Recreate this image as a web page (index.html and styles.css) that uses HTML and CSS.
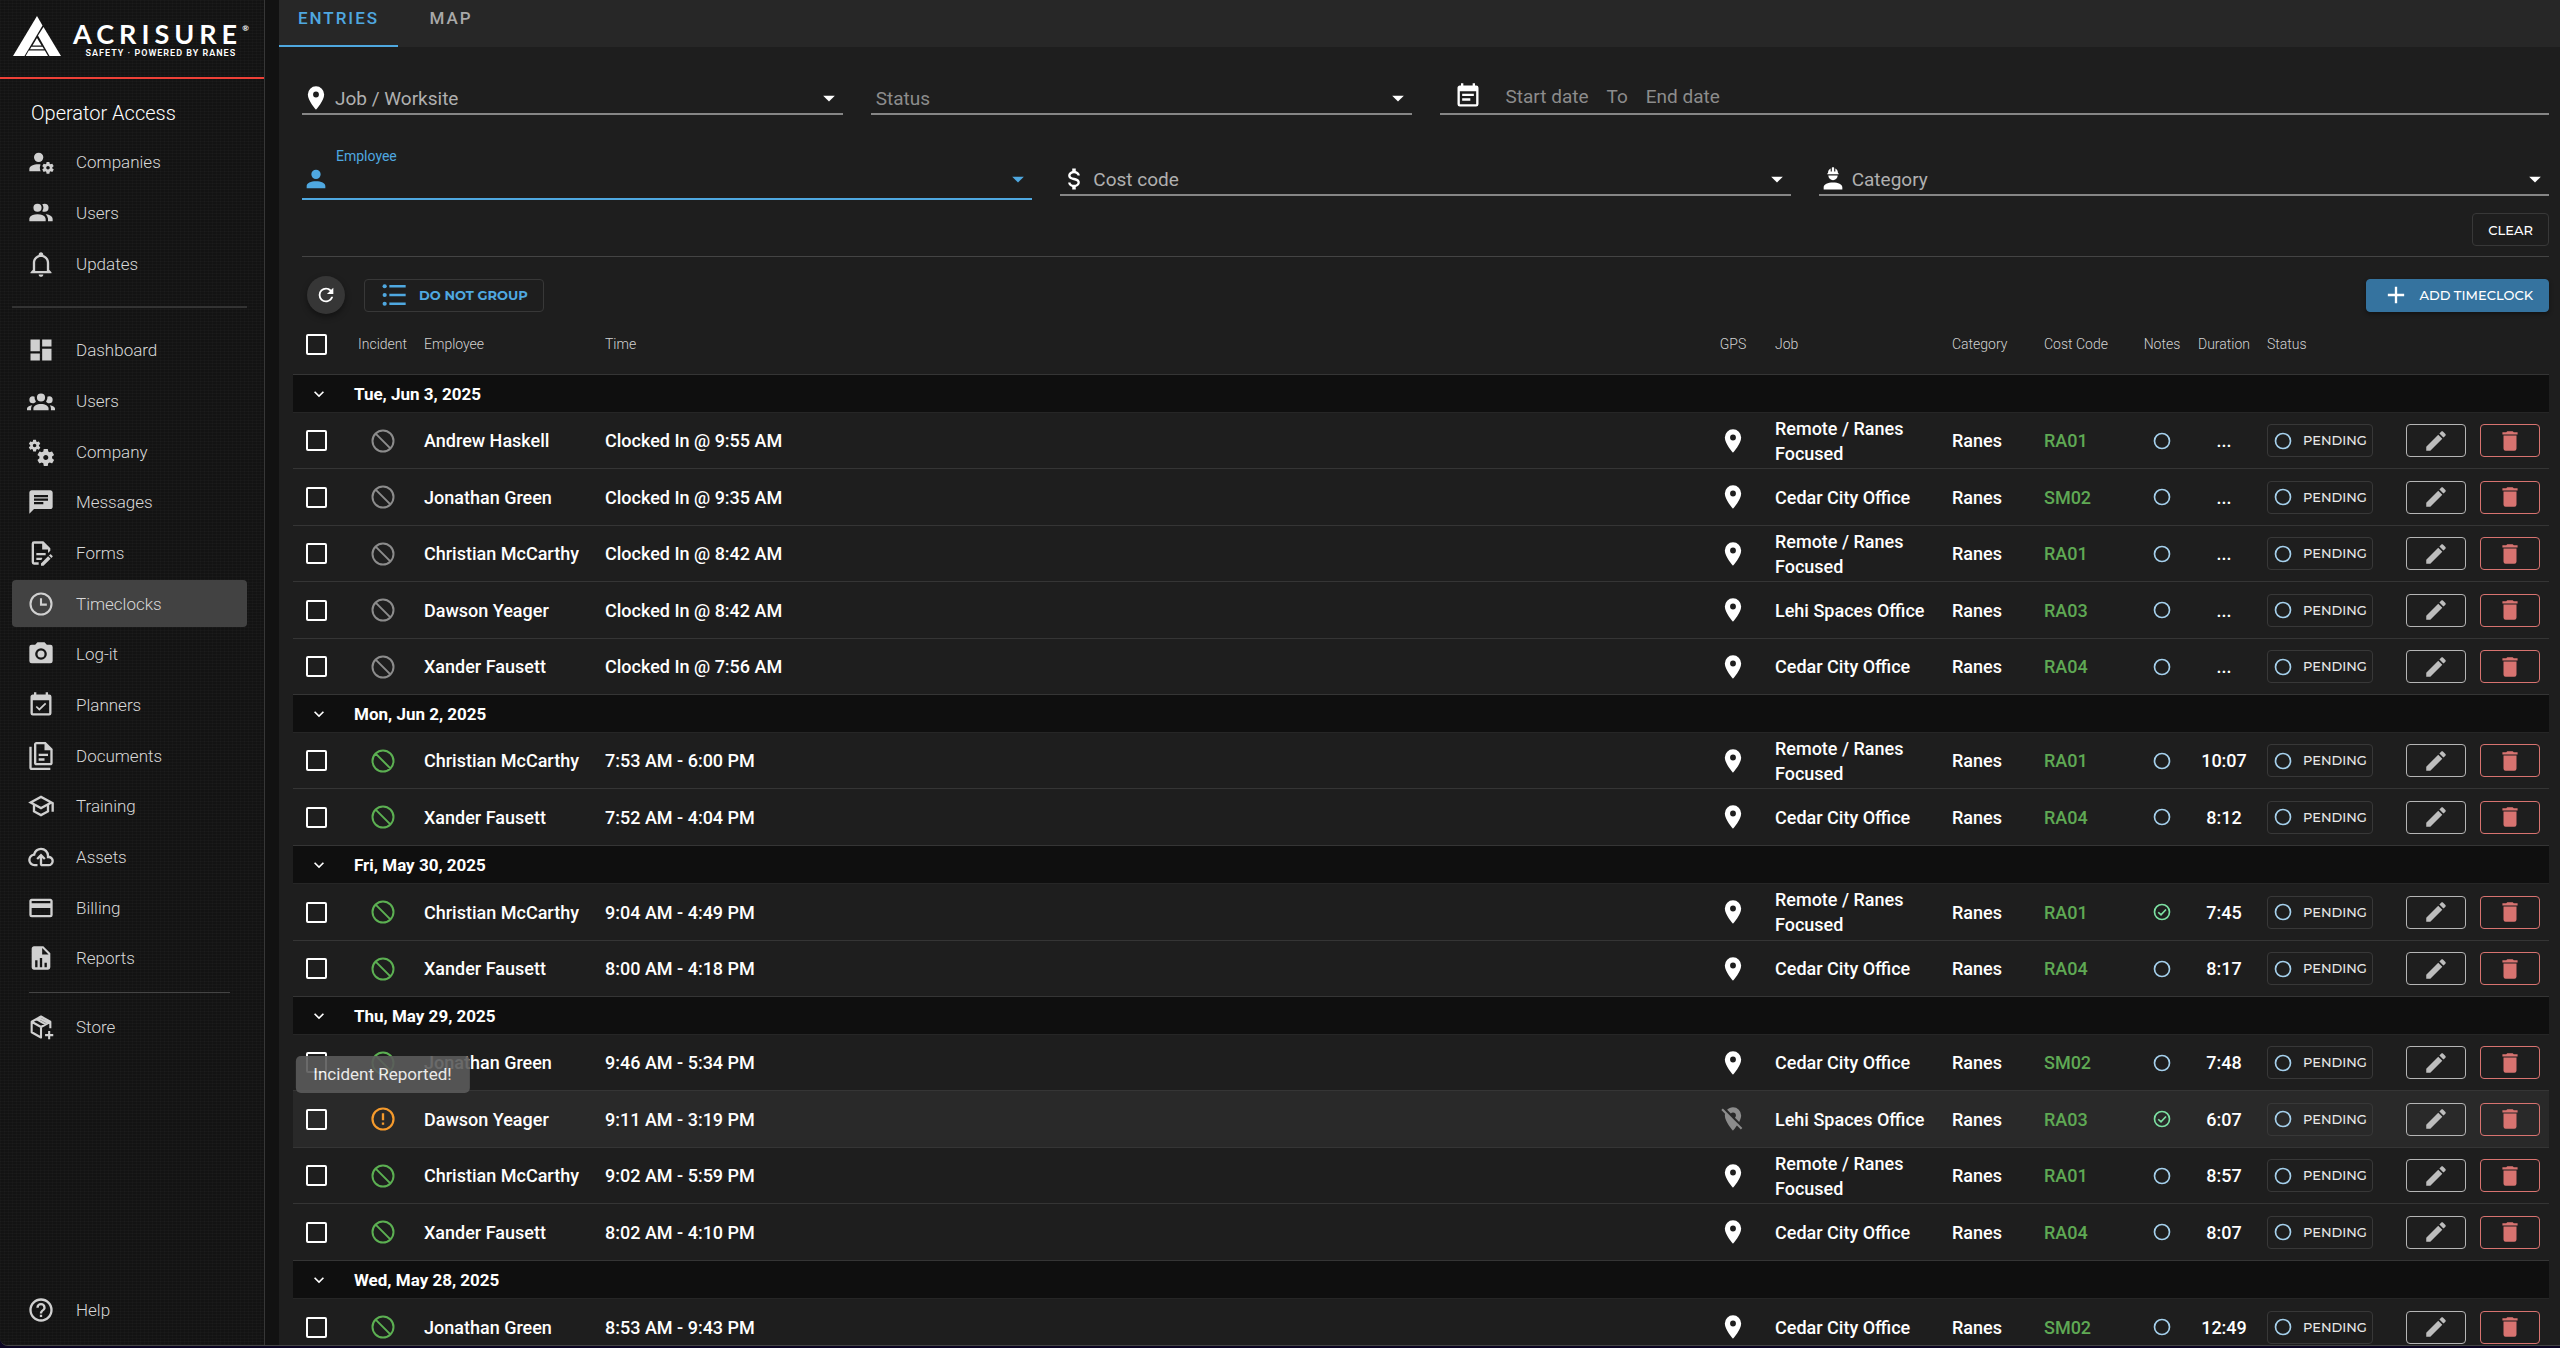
FILE: index.html
```html
<!DOCTYPE html>
<html lang="en">
<head>
    <meta charset="UTF-8">
    <meta name="viewport" content="width=device-width, initial-scale=1.0">
    <title>Timeclocks</title>
    <link rel="stylesheet" href="styles.css">
</head>
<body>
    <!-- Icon sprite -->
    <svg class="sprite" aria-hidden="true">
        <symbol id="gear" viewBox="0 0 24 24"><path fill-rule="evenodd" d="M17 12C16.87 12 16.76 12.09 16.74 12.21L16.55 13.53C16.25 13.66 15.96 13.82 15.7 14L14.46 13.5C14.35 13.5 14.22 13.5 14.15 13.63L13.15 15.36C13.09 15.47 13.11 15.6 13.21 15.68L14.27 16.5C14.25 16.67 14.24 16.83 14.24 17C14.24 17.17 14.25 17.33 14.27 17.5L13.21 18.32C13.12 18.4 13.09 18.53 13.15 18.64L14.15 20.37C14.21 20.5 14.34 20.5 14.46 20.5L15.7 20C15.96 20.18 16.24 20.35 16.55 20.47L16.74 21.79C16.76 21.91 16.86 22 17 22H19C19.11 22 19.22 21.91 19.24 21.79L19.43 20.47C19.73 20.34 20 20.18 20.27 20L21.5 20.5C21.63 20.5 21.76 20.5 21.83 20.37L22.83 18.64C22.89 18.53 22.86 18.4 22.77 18.32L21.7 17.5C21.72 17.33 21.74 17.17 21.74 17C21.74 16.83 21.73 16.67 21.7 16.5L22.76 15.68C22.85 15.6 22.88 15.47 22.82 15.36L21.82 13.63C21.76 13.5 21.63 13.5 21.5 13.5L20.27 14C20 13.82 19.73 13.65 19.42 13.53L19.23 12.21C19.22 12.09 19.11 12 19 12H17M18 15.5C18.83 15.5 19.5 16.17 19.5 17C19.5 17.83 18.83 18.5 18 18.5C17.16 18.5 16.5 17.83 16.5 17C16.5 16.17 17.17 15.5 18 15.5Z"/></symbol>
        <symbol id="account-cog" viewBox="0 0 24 24"><path d="M10 4A4 4 0 0 0 6 8A4 4 0 0 0 10 12A4 4 0 0 0 14 8A4 4 0 0 0 10 4M10 14C5.58 14 2 15.79 2 18V20H11.68A7 7 0 0 1 11 17A7 7 0 0 1 11.64 14.09C11.11 14.03 10.56 14 10 14Z"/><use href="#gear" width="24" height="24"/></symbol>
        <symbol id="cogs" viewBox="0 0 24 24"><use href="#gear" width="24" height="24" transform="translate(-11.5 -10.5)"/><use href="#gear" width="24" height="24" transform="translate(-10 -8) scale(1.45)"/></symbol>
        <symbol id="account-multiple" viewBox="0 0 24 24"><path d="M16 17V19H2V17S2 13 9 13 16 17 16 17M12.5 7.5A3.5 3.5 0 1 0 9 11A3.5 3.5 0 0 0 12.5 7.5M15.94 13A5.32 5.32 0 0 1 18 17V19H22V17S22 13.37 15.94 13M15 4A3.39 3.39 0 0 0 13.07 4.59A5 5 0 0 1 13.07 10.41A3.39 3.39 0 0 0 15 11A3.5 3.5 0 0 0 15 4Z"/></symbol>
        <symbol id="bell" viewBox="0 0 24 24"><path fill-rule="evenodd" d="M10 21H14C14 22.1 13.1 23 12 23S10 22.1 10 21M21 19V20H3V19L5 17V11C5 7.9 7 5.2 10 4.3V4C10 2.9 10.9 2 12 2S14 2.9 14 4V4.3C17 5.2 19 7.9 19 11V17L21 19M17 11C17 8.2 14.8 6 12 6S7 8.2 7 11V18H17V11Z"/></symbol>
        <symbol id="dashboard" viewBox="0 0 24 24"><path d="M13,3V9H21V3M13,21H21V11H13M3,21H11V15H3M3,13H11V3H3V13Z"/></symbol>
        <symbol id="account-group" viewBox="0 0 24 24"><path d="M12,5.5A3.5,3.5 0 0,1 15.5,9A3.5,3.5 0 0,1 12,12.5A3.5,3.5 0 0,1 8.5,9A3.5,3.5 0 0,1 12,5.5M5,8C5.56,8 6.08,8.15 6.53,8.42C6.38,9.85 6.8,11.27 7.66,12.38C7.16,13.34 6.16,14 5,14A3,3 0 0,1 2,11A3,3 0 0,1 5,8M19,8A3,3 0 0,1 22,11A3,3 0 0,1 19,14C17.84,14 16.84,13.34 16.34,12.38C17.2,11.27 17.62,9.85 17.47,8.42C17.92,8.15 18.44,8 19,8M5.5,18.25C5.5,16.18 8.41,14.5 12,14.5C15.59,14.5 18.5,16.18 18.5,18.25V20H5.5V18.25M0,20V18.5C0,17.11 1.89,15.94 4.45,15.6C3.86,16.28 3.5,17.22 3.5,18.25V20H0M24,20H20.5V18.25C20.5,17.22 20.14,16.28 19.55,15.6C22.11,15.94 24,17.11 24,18.5V20Z"/></symbol>
        <symbol id="message" viewBox="0 0 24 24"><path fill-rule="evenodd" d="M20 2H4c-1.1 0-1.99.9-1.99 2L2 22l4-4h14c1.1 0 2-.9 2-2V4c0-1.1-.9-2-2-2zM6 9h12v2H6V9zm8 5H6v-2h8v2zm4-6H6V6h12v2z"/></symbol>
        <symbol id="form" viewBox="0 0 24 24"><path d="M8,12H16V14H8V12M10,20H6V4H13V9H18V12.1L20,10.1V8L14,2H6A2,2 0 0,0 4,4V20A2,2 0 0,0 6,22H10V20M8,18H12.1L13,17.1V16H8V18M20.2,13C20.3,13 20.5,13.1 20.6,13.2L21.9,14.5C22.1,14.7 22.1,15.1 21.9,15.3L20.9,16.3L18.8,14.2L19.8,13.2C19.9,13.1 20,13 20.2,13M20.2,16.9L14.1,23H12V20.9L18.1,14.8L20.2,16.9Z"/></symbol>
        <symbol id="clock" viewBox="0 0 24 24"><path d="M12 3a9 9 0 1 0 0 18a9 9 0 1 0 0-18M12 7V12.5H17" fill="none" stroke="currentColor" stroke-width="1.8"/></symbol>
        <symbol id="camera" viewBox="0 0 24 24"><path fill-rule="evenodd" d="M4,4H7L9,2H15L17,4H20A2,2 0 0,1 22,6V18A2,2 0 0,1 20,20H4A2,2 0 0,1 2,18V6A2,2 0 0,1 4,4M12,7A5,5 0 0,0 7,12A5,5 0 0,0 12,17A5,5 0 0,0 17,12A5,5 0 0,0 12,7M12,9A3,3 0 0,1 15,12A3,3 0 0,1 12,15A3,3 0 0,1 9,12A3,3 0 0,1 12,9Z"/></symbol>
        <symbol id="calendar-check" viewBox="0 0 24 24"><path fill-rule="evenodd" d="M19,19H5V8H19M19,3H18V1H16V3H8V1H6V3H5C3.89,3 3,3.9 3,5V19A2,2 0 0,0 5,21H19A2,2 0 0,0 21,19V5A2,2 0 0,0 19,3M16.53,11.06L15.47,10L10.59,14.88L8.47,12.76L7.41,13.82L10.59,17L16.53,11.06Z"/></symbol>
        <symbol id="documents" viewBox="0 0 24 24"><path fill-rule="evenodd" d="M16 0H8C6.9 0 6 .9 6 2V18C6 19.1 6.9 20 8 20H20C21.1 20 22 19.1 22 18V6L16 0M20 18H8V2H15V7H20V18M4 4V22H20V24H4C2.9 24 2 23.1 2 22V4H4M10 10V12H18V10H10M10 14V16H15V14H10Z"/></symbol>
        <symbol id="school" viewBox="0 0 24 24"><path fill-rule="evenodd" d="M12 3L1 9L5 11.18V17.18L12 21L19 17.18V11.18L21 10.09V17H23V9L12 3M18.82 9L12 12.72L5.18 9L12 5.28L18.82 9M17 16L12 18.72L7 16V12.27L12 15L17 12.27V16Z"/></symbol>
        <symbol id="cloud" viewBox="0 0 24 24"><path d="M6.5 20Q4.22 20 2.61 18.43 1 16.85 1 14.58 1 12.63 2.17 11.1 3.35 9.57 5.25 9.15 5.88 6.85 7.75 5.43 9.63 4 12 4 14.93 4 16.96 6.04 19 8.07 19 11 20.73 11.2 21.86 12.5 23 13.78 23 15.5 23 17.38 21.69 18.69 20.38 20 18.5 20H13Q12.18 20 11.59 19.41 11 18.83 11 18V12.85L9.4 14.4 8 13 12 9 16 13 14.6 14.4 13 12.85V18H18.5Q19.55 18 20.27 17.27 21 16.55 21 15.5 21 14.45 20.27 13.73 19.55 13 18.5 13H17V11Q17 8.93 15.54 7.46 14.08 6 12 6 9.93 6 8.46 7.46 7 8.93 7 11H6.5Q5.05 11 4.03 12.03 3 13.05 3 14.5 3 15.95 4.03 17 5.05 18 6.5 18H9V20Z"/></symbol>
        <symbol id="card" viewBox="0 0 24 24"><path fill-rule="evenodd" d="M20,8H4V6H20M20,18H4V12H20M20,4H4C2.89,4 2,4.89 2,6V18A2,2 0 0,0 4,20H20A2,2 0 0,0 22,18V6C22,4.89 21.1,4 20,4Z"/></symbol>
        <symbol id="report" viewBox="0 0 24 24"><path fill-rule="evenodd" d="M13,9H18.5L13,3.5V9M6,2H14L20,8V20A2,2 0 0,1 18,22H6C4.89,22 4,21.1 4,20V4C4,2.89 4.89,2 6,2M7,20H9V14H7V20M11,20H13V12H11V20M15,20H17V16H15V20Z"/></symbol>
        <symbol id="package" viewBox="0 0 24 24"><path fill="none" stroke="currentColor" stroke-width="1.8" stroke-linejoin="round" d="M20 13V7.5L12 3L4 7.500V16.500L12 21V12L4 7.500M12 12L20 7.500M8 5.250L16 9.750M10 4.200L18 8.600M19 15.500V22.500M15.500 19H22.500"/></symbol>
        <symbol id="help" viewBox="0 0 24 24"><path fill-rule="evenodd" d="M11,18H13V16H11V18M12,2A10,10 0 0,0 2,12A10,10 0 0,0 12,22A10,10 0 0,0 22,12A10,10 0 0,0 12,2M12,20C7.59,20 4,16.41 4,12C4,7.59 7.59,4 12,4C16.41,4 20,7.59 20,12C20,16.41 16.41,20 12,20M12,6A4,4 0 0,0 8,10H10A2,2 0 0,1 12,8A2,2 0 0,1 14,10C14,12 11,11.75 11,15H13C13,12.75 16,12.5 16,10A4,4 0 0,0 12,6Z"/></symbol>
        <symbol id="marker" viewBox="0 0 24 24"><path fill-rule="evenodd" d="M12,11.5A2.5,2.5 0 0,1 9.5,9A2.5,2.5 0 0,1 12,6.5A2.5,2.5 0 0,1 14.5,9A2.5,2.5 0 0,1 12,11.5M12,2A7,7 0 0,0 5,9C5,14.25 12,22 12,22C12,22 19,14.25 19,9A7,7 0 0,0 12,2Z"/></symbol>
        <symbol id="marker-off" viewBox="0 0 24 24"><path d="M16.37,16.1L11.75,11.47L11.64,11.36L3.27,3L2,4.27L5.18,7.45C5.06,7.95 5,8.46 5,9C5,14.25 12,22 12,22C12,22 13.67,20.15 15.37,17.65L18.73,21L20,19.72M12,6.5A2.5,2.5 0 0,1 14.5,9C14.5,9.73 14.17,10.39 13.67,10.85L17.3,14.5C18.28,12.62 19,10.68 19,9A7,7 0 0,0 12,2C10,2 8.24,2.82 6.96,4.14L10.15,7.33C10.61,6.82 11.26,6.5 12,6.5Z"/></symbol>
        <symbol id="account" viewBox="0 0 24 24"><path d="M12,4A4,4 0 0,1 16,8A4,4 0 0,1 12,12A4,4 0 0,1 8,8A4,4 0 0,1 12,4M12,14C16.42,14 20,15.79 20,18V20H4V18C4,15.79 7.58,14 12,14Z"/></symbol>
        <symbol id="dollar" viewBox="0 0 24 24"><path d="M7,15H9C9,16.08 10.37,17 12,17C13.63,17 15,16.08 15,15C15,13.9 13.96,13.5 11.76,12.97C9.64,12.44 7,11.78 7,9C7,7.21 8.47,5.69 10.5,5.18V3H13.5V5.18C15.53,5.69 17,7.21 17,9H15C15,7.92 13.63,7 12,7C10.37,7 9,7.92 9,9C9,10.1 10.04,10.5 12.24,11.03C14.36,11.56 17,12.22 17,15C17,16.79 15.53,18.31 13.5,18.82V21H10.5V18.82C8.47,18.31 7,16.79 7,15Z"/></symbol>
        <symbol id="hard-hat" viewBox="0 0 24 24"><path d="M12,15C7.58,15 4,16.79 4,19V21H20V19C20,16.79 16.42,15 12,15M8,9A4,4 0 0,0 12,13A4,4 0 0,0 16,9M11.5,2C11.2,2 11,2.21 11,2.5V5.5H10V3C10,3 7.75,3.86 7.75,6.75C7.75,6.75 7,6.89 7,8H17C16.95,6.89 16.25,6.75 16.25,6.75C16.25,3.86 14,3 14,3V5.5H13V2.5C13,2.21 12.81,2 12.5,2H11.5Z"/></symbol>
        <symbol id="calendar-text" viewBox="0 0 24 24"><path fill-rule="evenodd" d="M14,14H7V16H14M19,19H5V8H19M19,3H18V1H16V3H8V1H6V3H5C3.89,3 3,3.9 3,5V19A2,2 0 0,0 5,21H19A2,2 0 0,0 21,19V5A2,2 0 0,0 19,3M17,10H7V12H17V10Z"/></symbol>
        <symbol id="refresh" viewBox="0 0 24 24"><path d="M17.65,6.35C16.2,4.9 14.21,4 12,4A8,8 0 0,0 4,12A8,8 0 0,0 12,20C15.73,20 18.84,17.45 19.73,14H17.65C16.83,16.33 14.61,18 12,18A6,6 0 0,1 6,12A6,6 0 0,1 12,6C13.66,6 15.14,6.69 16.22,7.78L13,11H20V4L17.65,6.35Z"/></symbol>
        <symbol id="list" viewBox="0 0 24 24"><path d="M8 3.500H22V5.500H8ZM8 11H22V13H8ZM8 18.500H22V20.500H8Z"/><circle cx="4" cy="4.500" r="1.800"/><circle cx="4" cy="12" r="1.800"/><circle cx="4" cy="19.500" r="1.800"/></symbol>
        <symbol id="plus" viewBox="0 0 24 24"><path d="M19,13H13V19H11V13H5V11H11V5H13V11H19V13Z"/></symbol>
        <symbol id="caret" viewBox="0 0 24 24"><path d="M7,10L12,15L17,10H7Z"/></symbol>
        <symbol id="chevron" viewBox="0 0 24 24"><path d="M7.41,8.58L12,13.17L16.59,8.58L18,10L12,16L6,10L7.41,8.58Z"/></symbol>
        <symbol id="cancel" viewBox="0 0 24 24"><path d="M12 3a9 9 0 1 0 0 18a9 9 0 1 0 0-18M5.700 5.700L18.300 18.300" fill="none" stroke="currentColor" stroke-width="1.700"/></symbol>
        <symbol id="alert" viewBox="0 0 24 24"><path d="M11,15H13V17H11V15M11,7H13V13H11V7"/><circle cx="12" cy="12" r="9" fill="none" stroke="currentColor" stroke-width="1.900"/></symbol>
        <symbol id="circle" viewBox="0 0 24 24"><circle cx="12" cy="12" r="9" fill="none" stroke="currentColor" stroke-width="2"/></symbol>
        <symbol id="check-circle" viewBox="0 0 24 24"><path d="M12 3a9 9 0 1 0 0 18a9 9 0 1 0 0-18M7.500 12.300L10.800 15.500L16.800 9" fill="none" stroke="currentColor" stroke-width="2"/></symbol>
        <symbol id="pencil" viewBox="0 0 24 24"><path d="M20.71,7.04C21.1,6.65 21.1,6 20.71,5.63L18.37,3.29C18,2.9 17.35,2.9 16.96,3.29L15.12,5.12L18.87,8.87M3,17.25V21H6.75L17.81,9.93L14.06,6.18L3,17.25Z"/></symbol>
        <symbol id="trash" viewBox="0 0 24 24"><path d="M19,4H15.5L14.5,3H9.5L8.5,4H5V6H19M6,19A2,2 0 0,0 8,21H16A2,2 0 0,0 18,19V7H6V19Z"/></symbol>
    </svg>

    <div class="app">
        <aside class="sidebar">
            <div class="brand">
                <svg class="brand-mark" viewBox="0 0 48 40" aria-hidden="true">
                    <path fill="#fff" d="M24 0L29.500 9.500L11.500 40H0Z"/>
                    <path fill="#fff" d="M30.500 11L48 40H36.500L25 19.500Z"/>
                    <path fill="#fff" d="M24 22L28.500 29.500H19.500ZM18.500 30.700H29.500L31 33.300H17ZM15.800 34.500H31.800L35 40H12.700Z"/>
                </svg>
                <div class="brand-text">
                    <span class="brand-name">ACRISURE<sup class="brand-reg">®</sup></span>
                    <span class="brand-tag">SAFETY · POWERED BY RANES</span>
                </div>
            </div>
            <nav class="side-nav" aria-label="Main">
                <h2 class="nav-title">Operator Access</h2>
                <ul class="nav-list">
                    <li><a href="#"><svg><use href="#account-cog"/></svg>Companies</a></li>
                    <li><a href="#"><svg><use href="#account-multiple"/></svg>Users</a></li>
                    <li><a href="#"><svg><use href="#bell"/></svg>Updates</a></li>
                </ul>
                <hr class="nav-divider">
                <ul class="nav-list">
                    <li><a href="#"><svg><use href="#dashboard"/></svg>Dashboard</a></li>
                    <li><a href="#"><svg><use href="#account-group"/></svg>Users</a></li>
                    <li><a href="#"><svg><use href="#cogs"/></svg>Company</a></li>
                    <li><a href="#"><svg><use href="#message"/></svg>Messages</a></li>
                    <li><a href="#"><svg><use href="#form"/></svg>Forms</a></li>
                    <li><a href="#" class="active" aria-current="page"><svg><use href="#clock"/></svg>Timeclocks</a></li>
                    <li><a href="#"><svg><use href="#camera"/></svg>Log-it</a></li>
                    <li><a href="#"><svg><use href="#calendar-check"/></svg>Planners</a></li>
                    <li><a href="#"><svg><use href="#documents"/></svg>Documents</a></li>
                    <li><a href="#"><svg><use href="#school"/></svg>Training</a></li>
                    <li><a href="#"><svg><use href="#cloud"/></svg>Assets</a></li>
                    <li><a href="#"><svg><use href="#card"/></svg>Billing</a></li>
                    <li><a href="#"><svg><use href="#report"/></svg>Reports</a></li>
                </ul>
                <hr class="nav-divider short">
                <ul class="nav-list">
                    <li><a href="#"><svg><use href="#package"/></svg>Store</a></li>
                </ul>
                <ul class="nav-list nav-bottom">
                    <li><a href="#"><svg><use href="#help"/></svg>Help</a></li>
                </ul>
            </nav>
        </aside>

        <main class="main">
            <div class="tabs" role="tablist">
                <button class="tab selected" role="tab" aria-selected="true">ENTRIES</button>
                <button class="tab" role="tab" aria-selected="false">MAP</button>
            </div>

            <form class="filters">
                <div class="filter-row four">
                    <div class="field">
                        <svg class="field-icon"><use href="#marker"/></svg>
                        <select aria-label="Job / Worksite"><option>Job / Worksite</option></select>
                        <svg class="field-caret"><use href="#caret"/></svg>
                    </div>
                    <div class="field plain">
                        <select aria-label="Status"><option>Status</option></select>
                        <svg class="field-caret"><use href="#caret"/></svg>
                    </div>
                    <div class="field dates">
                        <svg class="field-icon"><use href="#calendar-text"/></svg>
                        <input type="text" placeholder="Start date" aria-label="Start date">
                        <span>To</span>
                        <input type="text" placeholder="End date" aria-label="End date">
                    </div>
                </div>
                <div class="filter-row three">
                    <div class="field focused">
                        <label for="employee">Employee</label>
                        <svg class="field-icon"><use href="#account"/></svg>
                        <select id="employee"><option></option></select>
                        <svg class="field-caret"><use href="#caret"/></svg>
                    </div>
                    <div class="field">
                        <svg class="field-icon"><use href="#dollar"/></svg>
                        <select aria-label="Cost code"><option>Cost code</option></select>
                        <svg class="field-caret"><use href="#caret"/></svg>
                    </div>
                    <div class="field">
                        <svg class="field-icon"><use href="#hard-hat"/></svg>
                        <select aria-label="Category"><option>Category</option></select>
                        <svg class="field-caret"><use href="#caret"/></svg>
                    </div>
                </div>
                <div class="filter-actions">
                    <button type="reset" class="btn">CLEAR</button>
                </div>
            </form>

            <div class="toolbar">
                <button class="refresh-btn" aria-label="Refresh"><svg><use href="#refresh"/></svg></button>
                <button class="btn group-btn"><svg><use href="#list"/></svg>DO NOT GROUP</button>
                <button class="btn add-btn"><svg><use href="#plus"/></svg>ADD TIMECLOCK</button>
            </div>

            <div class="table-wrap">
                <table class="entries">
                    <colgroup>
                        <col class="c-check"><col class="c-incident"><col class="c-employee"><col>
                        <col class="c-gps"><col class="c-job"><col class="c-category"><col class="c-cost">
                        <col class="c-notes"><col class="c-duration"><col class="c-status"><col class="c-actions">
                    </colgroup>
                    <thead>
                        <tr>
                            <th class="check"><input type="checkbox" aria-label="Select all"></th>
                            <th class="mid">Incident</th>
                            <th>Employee</th>
                            <th>Time</th>
                            <th class="mid">GPS</th>
                            <th>Job</th>
                            <th>Category</th>
                            <th>Cost Code</th>
                            <th class="mid">Notes</th>
                            <th class="mid">Duration</th>
                            <th>Status</th>
                            <th></th>
                        </tr>
                    </thead>
                </table>
            </div>
        </main>
    </div>
    <script src="script.js"></script>
</body>
</html>
```
FILE: styles.css
```css
* {
    margin: 0;
    padding: 0;
    box-sizing: border-box;
}

body {
    background: #0b0522;
    color: #fff;
    font-family: Roboto, "Liberation Sans", sans-serif;
    font-size: 17px;
}

button, input, select {
    font: inherit;
    color: inherit;
    background: none;
    border: none;
    outline: none;
}

svg {
    fill: currentColor;
    flex: none;
}

.sprite {
    display: none;
}

.app {
    display: flex;
    height: calc(100vh - 2px);
    overflow: hidden;
    background: #121212;
    border-bottom: 1px solid #444;
    border-bottom-left-radius: 8px;
}

/* Sidebar */
.sidebar {
    width: 265px;
    flex: none;
    display: flex;
    flex-direction: column;
    border-right: 1px solid #373737;
    background:
        repeating-linear-gradient(0deg, rgba(255, 255, 255, 0.02) 0 1px, transparent 1px 3px),
        repeating-linear-gradient(90deg, rgba(255, 255, 255, 0.015) 0 1px, transparent 1px 4px),
        #131313;
}

.brand {
    height: 79px;
    flex: none;
    display: flex;
    align-items: flex-start;
    gap: 12px;
    padding: 16px 0 0 13px;
    border-bottom: 2px solid #ee4037;
}

.brand-mark {
    width: 48px;
    height: 40px;
}

.brand-text {
    display: flex;
    flex-direction: column;
    align-items: center;
    padding-top: 5px;
}

.brand-name {
    display: flex;
    font-family: Lato, sans-serif;
    font-size: 27px;
    font-weight: 700;
    line-height: 26px;
    letter-spacing: 5px;
}

.brand-reg {
    font-size: 8px;
    line-height: 14px;
    letter-spacing: 0;
}

.brand-tag {
    font-size: 9px;
    font-weight: 600;
    line-height: 12px;
    letter-spacing: 1px;
}

.side-nav {
    flex: 1;
    display: flex;
    flex-direction: column;
    padding: 20px 17px 8px 12px;
}

.nav-title {
    font-size: 20px;
    font-weight: 300;
    line-height: 28px;
    padding-left: 19px;
    margin-bottom: 11px;
}

.nav-list {
    list-style: none;
}

.nav-list li {
    margin-bottom: 4px;
}

.nav-list li:nth-child(3n) {
    margin-bottom: 3px;
}

.nav-list a {
    display: flex;
    align-items: center;
    gap: 21px;
    height: 47px;
    padding-left: 15px;
    border-radius: 4px;
    color: #d8d8d8;
    font-weight: 300;
    text-decoration: none;
}

.nav-list a.active {
    background: #424242;
}

.nav-list svg {
    width: 28px;
    height: 28px;
    color: #d0d0d0;
}

.nav-divider {
    border: none;
    border-top: 2px solid #333;
    margin: 16px 0 18px;
}

.nav-divider.short {
    border-top: 1px solid #444;
    margin: 7px 17px 10px;
}

.nav-bottom {
    margin-top: auto;
}

/* Main */
.main {
    flex: 1;
    min-width: 0;
    margin-left: 14px;
    background: #1e1e1e;
}

.tabs {
    display: flex;
    height: 47px;
    background: #272727;
}

.tab {
    padding: 0 18px 9px;
    border-bottom: 2px solid transparent;
    color: #a9a9a9;
    font-weight: 500;
    letter-spacing: 2px;
    min-width: 106px;
}

.tab.selected {
    min-width: 119px;
    color: #4fa8e0;
    border-bottom-color: #4fa8e0;
}

.filters {
    margin: 0 11px 0 23px;
    padding: 36px 0 10px;
    border-bottom: 1px solid #444;
}

.filter-row {
    display: grid;
    align-items: start;
    gap: 28px;
    margin-bottom: 49px;
}

.filter-row.four {
    grid-template-columns: repeat(4, 1fr);
}

.filter-row.three {
    grid-template-columns: repeat(3, 1fr);
    margin-bottom: 13px;
}

.field {
    position: relative;
    display: flex;
    align-items: center;
    height: 32px;
    border-bottom: 2px solid #868686;
    color: #b0b0b0;
    font-size: 19px;
}

.field select {
    flex: 1;
    height: 30px;
    appearance: none;
    padding-left: 5px;
}

.field-icon,
.field-caret {
    width: 28px;
    height: 28px;
    color: #fff;
}

.field.plain {
    color: #8c8c8c;
}

.field.dates {
    grid-column: span 2;
    padding: 0 14px 4px;
    color: #8c8c8c;
}

.field.dates input {
    width: 84px;
    margin-left: 24px;
}

.field.dates span {
    margin: 0 -6px 0 17px;
}

.field.dates input::placeholder {
    color: #8c8c8c;
    opacity: 1;
}

.field.focused {
    height: 36px;
    padding-bottom: 4px;
    border-bottom-color: #4fa8e0;
}

.field.focused label {
    position: absolute;
    top: -16px;
    left: 34px;
    font-size: 14px;
    color: #4fa8e0;
}

.field.focused svg {
    color: #4fa8e0;
}

.filter-actions {
    display: flex;
    justify-content: flex-end;
}

.btn {
    display: flex;
    align-items: center;
    height: 33px;
    padding: 0 15px;
    border: 1px solid #383838;
    border-radius: 4px;
    font-family: Montserrat, Inter, sans-serif;
    font-size: 13px;
    font-weight: 500;
    cursor: pointer;
}

.toolbar {
    display: flex;
    align-items: center;
    margin: 19px 11px 0 28px;
}

.refresh-btn {
    display: flex;
    align-items: center;
    justify-content: center;
    width: 38px;
    height: 38px;
    margin-right: 19px;
    border-radius: 50%;
    background: #363636;
    box-shadow: 0 3px 6px rgba(0, 0, 0, 0.4);
}

.refresh-btn svg {
    width: 22px;
    height: 22px;
}

.group-btn {
    gap: 11px;
    color: #4fa8e0;
    font-weight: 700;
}

.group-btn svg {
    width: 28px;
    height: 28px;
}

.add-btn {
    margin-left: auto;
    gap: 9px;
    background: #35739f;
    border-color: #35739f;
    box-shadow: 0 2px 4px rgba(0, 0, 0, 0.4);
}

.add-btn svg {
    width: 28px;
    height: 28px;
}

/* Entries table */
.table-wrap {
    padding: 0 11px 0 14px;
}

.entries {
    width: 100%;
    table-layout: fixed;
    border-collapse: separate;
    border-spacing: 0;
}

.c-check { width: 57px; }
.c-incident { width: 65px; }
.c-employee { width: 181px; }
.c-gps { width: 66px; }
.c-job { width: 177px; }
.c-category { width: 92px; }
.c-cost { width: 99px; }
.c-notes { width: 56px; }
.c-duration { width: 68px; }
.c-status { width: 134px; }
.c-actions { width: 157px; }

.entries th,
.entries td {
    padding: 0 9px;
    border-bottom: 1px solid #353535;
    text-align: left;
    vertical-align: middle;
}

.entries thead th {
    height: 61px;
    color: #d2d2d2;
    font-size: 14px;
    font-weight: 300;
}

.entries td {
    height: 56px;
    font-size: 18px;
    font-weight: 500;
    line-height: 25px;
}

.entries tr.entry:nth-child(odd) td {
    height: 57px;
}

.entries .mid {
    padding: 0;
    text-align: center;
}

.entries .check {
    padding: 0 0 0 13px;
}

.entries svg {
    display: block;
}

.entries .mid svg {
    width: 28px;
    height: 28px;
    margin: 0 auto;
}

.entries input[type="checkbox"] {
    display: block;
    width: 21px;
    height: 21px;
    appearance: none;
    border: 2px solid #fff;
    border-radius: 2px;
}

.entries .group th {
    height: 38px;
    background: #0f0f0f;
    border-bottom-color: #262626;
    font-weight: 700;
}

.group-head {
    display: flex;
    align-items: center;
    gap: 25px;
    padding-left: 7px;
}

.group-head svg {
    width: 20px;
    height: 20px;
}

.entries tr.hovered td {
    background: #292929;
}

.incident-none { color: #8c8c8c; }
.incident-ok { color: #5cb052; }
.incident-alert { color: #f59a2c; }
.gps-off { color: #8c8c8c; }
.entries .cost { color: #5fa954; }
.note-none { color: #a5d0ec; }
.note-set { color: #7ce0a2; }

.entries td.notes svg {
    width: 20px;
    height: 20px;
}

.incident {
    position: relative;
    display: block;
}

.tooltip {
    position: absolute;
    z-index: 1;
    left: 50%;
    bottom: 40px;
    transform: translateX(-50%);
    padding: 6px 18px;
    border-radius: 5px;
    background: #5a5a5a;
    color: #fff;
    font-size: 17px;
    font-weight: 400;
    white-space: nowrap;
    opacity: 0.9;
}

.status-btn {
    gap: 10px;
    width: 106px;
    padding: 0 5px;
    color: #e8e8e8;
}

.status-btn svg {
    width: 20px;
    height: 20px;
    color: #a5d0ec;
}

.row-actions {
    display: flex;
    justify-content: flex-end;
    gap: 14px;
}

.icon-btn {
    display: flex;
    align-items: center;
    justify-content: center;
    width: 60px;
    height: 33px;
    border: 1px solid #b5b5b5;
    border-radius: 4px;
    color: #bdbdbd;
}

.icon-btn.danger {
    border-color: #d87370;
    color: #d87370;
}

.icon-btn svg {
    width: 26px;
    height: 26px;
}
```
FILE: script.js
```js
// employee, time, job, cost code, duration, incident, note, gps
const groups = [
    ['Tue, Jun 3, 2025', [
        ['Andrew Haskell', 'Clocked In @ 9:55 AM', 'Remote / Ranes Focused', 'RA01', '...', 'none'],
        ['Jonathan Green', 'Clocked In @ 9:35 AM', 'Cedar City Office', 'SM02', '...', 'none'],
        ['Christian McCarthy', 'Clocked In @ 8:42 AM', 'Remote / Ranes Focused', 'RA01', '...', 'none'],
        ['Dawson Yeager', 'Clocked In @ 8:42 AM', 'Lehi Spaces Office', 'RA03', '...', 'none'],
        ['Xander Fausett', 'Clocked In @ 7:56 AM', 'Cedar City Office', 'RA04', '...', 'none']
    ]],
    ['Mon, Jun 2, 2025', [
        ['Christian McCarthy', '7:53 AM - 6:00 PM', 'Remote / Ranes Focused', 'RA01', '10:07', 'ok'],
        ['Xander Fausett', '7:52 AM - 4:04 PM', 'Cedar City Office', 'RA04', '8:12', 'ok']
    ]],
    ['Fri, May 30, 2025', [
        ['Christian McCarthy', '9:04 AM - 4:49 PM', 'Remote / Ranes Focused', 'RA01', '7:45', 'ok', true],
        ['Xander Fausett', '8:00 AM - 4:18 PM', 'Cedar City Office', 'RA04', '8:17', 'ok']
    ]],
    ['Thu, May 29, 2025', [
        ['Jonathan Green', '9:46 AM - 5:34 PM', 'Cedar City Office', 'SM02', '7:48', 'ok'],
        ['Dawson Yeager', '9:11 AM - 3:19 PM', 'Lehi Spaces Office', 'RA03', '6:07', 'alert', true, 'off'],
        ['Christian McCarthy', '9:02 AM - 5:59 PM', 'Remote / Ranes Focused', 'RA01', '8:57', 'ok'],
        ['Xander Fausett', '8:02 AM - 4:10 PM', 'Cedar City Office', 'RA04', '8:07', 'ok']
    ]],
    ['Wed, May 28, 2025', [
        ['Jonathan Green', '8:53 AM - 9:43 PM', 'Cedar City Office', 'SM02', '12:49', 'ok']
    ]]
];

const icon = name => `<svg><use href="#${name}"/></svg>`;

function entryRow([employee, time, job, cost, duration, incident, note, gps]) {
    const alert = incident === 'alert';
    return `
        <tr class="entry ${alert ? 'hovered' : ''}">
            <td class="check"><input type="checkbox" aria-label="Select ${employee}, ${time}"></td>
            <td class="mid">
                <span class="incident incident-${incident}">
                    ${icon(alert ? 'alert' : 'cancel')}
                    ${alert ? '<span class="tooltip" role="tooltip">Incident Reported!</span>' : ''}
                </span>
            </td>
            <td>${employee}</td>
            <td>${time}</td>
            <td class="mid ${gps ? 'gps-off' : ''}">${icon(gps ? 'marker-off' : 'marker')}</td>
            <td>${job}</td>
            <td>Ranes</td>
            <td class="cost">${cost}</td>
            <td class="mid notes ${note ? 'note-set' : 'note-none'}">${icon(note ? 'check-circle' : 'circle')}</td>
            <td class="mid">${duration}</td>
            <td><button class="btn status-btn">${icon('circle')}PENDING</button></td>
            <td>
                <div class="row-actions">
                    <button class="icon-btn" aria-label="Edit">${icon('pencil')}</button>
                    <button class="icon-btn danger" aria-label="Delete">${icon('trash')}</button>
                </div>
            </td>
        </tr>`;
}

const body = document.createElement('tbody');
body.innerHTML = groups.map(([date, rows]) => `
    <tr class="group">
        <th colspan="12">
            <div class="group-head"><button aria-label="Collapse ${date}">${icon('chevron')}</button>${date}</div>
        </th>
    </tr>${rows.map(entryRow).join('')}`).join('');
document.querySelector('.entries').append(body);
```
